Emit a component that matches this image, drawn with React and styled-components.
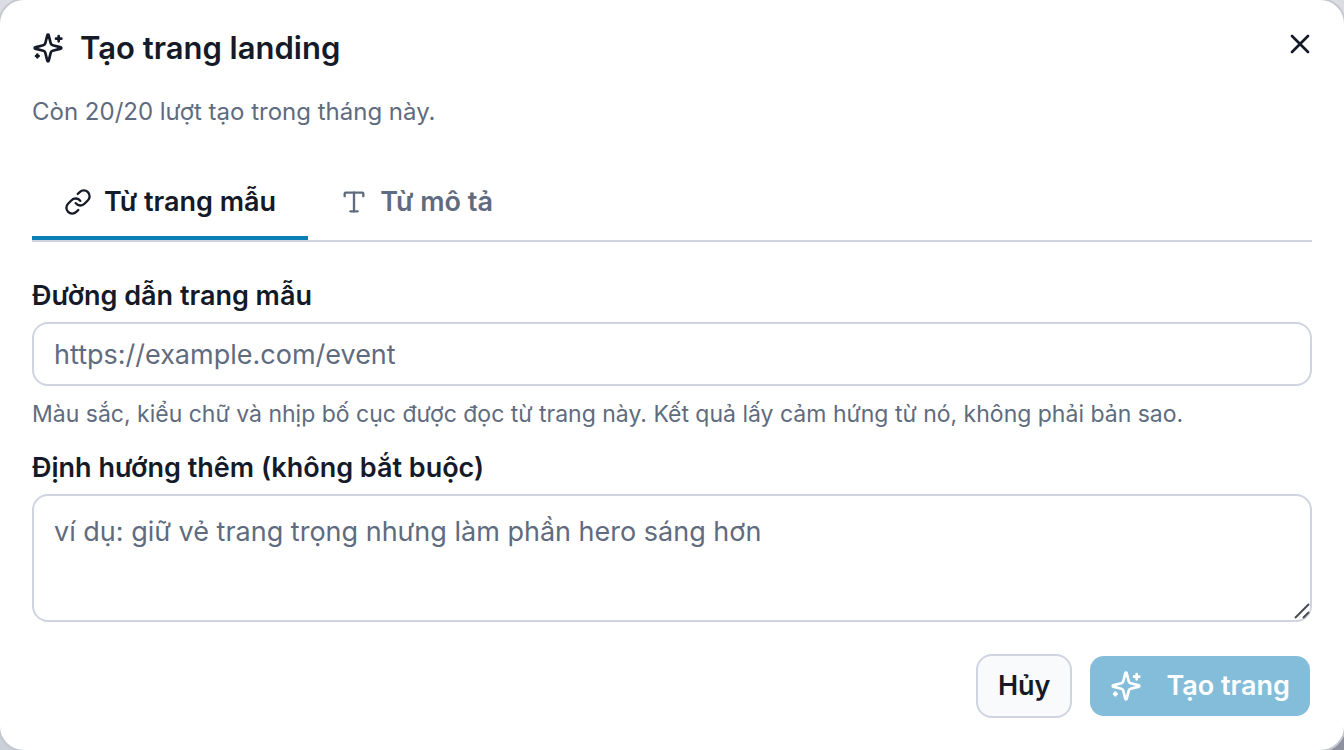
import React, { useState } from "react";
import styled, { createGlobalStyle } from "styled-components";
import { Link, Type, X } from "lucide-react";

const GlobalStyle = createGlobalStyle`
  *, *::before, *::after { box-sizing: border-box; }
  body {
    margin: 0;
    min-height: 100vh;
    background: linear-gradient(to bottom, #dcdde2 50%, transparent 50%),
      linear-gradient(to right, #c9d0d8 50%, #8d919e 50%);
    color: #151a28;
    font-family: Inter, "Liberation Sans", sans-serif;
    font-size: 27px;
    line-height: 40px;
  }
  button, input, textarea { font: inherit; color: inherit; }
`;

const Dialog = styled.section`
  padding: 28px 32px 32px;
  border-radius: 24px;
  background: #fff;
  box-shadow: 0 0 0 2px #c4c8cf;
`;

const Header = styled.header`
  display: flex;
  align-items: flex-start;
  justify-content: space-between;
`;

const Title = styled.h1`
  display: flex;
  align-items: center;
  gap: 16px;
  margin: 0;
  font-size: 31px;
  font-weight: 600;
  line-height: 40px;
`;

const CloseButton = styled.button`
  display: flex;
  margin-right: -4px;
  padding: 0;
  border: 0;
  background: none;
  cursor: pointer;
`;

const Description = styled.p`
  margin: 28px 0 0;
  color: #5f6b7e;
  font-size: 24px;
  line-height: 32px;
`;

const Hint = styled.p`
  margin: 12px 0 0;
  color: #5f6b7e;
  font-size: 23px;
  line-height: 32px;
`;

const TabList = styled.div`
  display: flex;
  margin-top: 40px;
  border-bottom: 2px solid #cfd4e0;
`;

const Tab = styled.button`
  display: flex;
  align-items: center;
  gap: 12px;
  padding: 14px 32px;
  border: 0;
  border-bottom: 4px solid ${({ $active }) => ($active ? "#0a80b6" : "transparent")};
  background: none;
  color: ${({ $active }) => ($active ? "#151a28" : "#5f6b7e")};
  font-weight: 600;
  cursor: pointer;
`;

const Field = styled.div`
  display: flex;
  flex-direction: column;
  margin-top: ${({ $top }) => $top}px;
`;

const Label = styled.label`
  margin-bottom: 6px;
  font-weight: 600;
`;

const controlStyles = `
  display: block;
  width: 100%;
  border: 2px solid #cfd4e0;
  border-radius: 16px;
  background: #fff;
  outline: none;
  &::placeholder { color: #5f6b7e; opacity: 1; }
`;

const TextInput = styled.input`
  ${controlStyles}
  height: 64px;
  padding: 0 20px;
`;

const AreaWrap = styled.div`
  position: relative;
`;

const TextArea = styled.textarea`
  ${controlStyles}
  height: 128px;
  padding: 16px 20px;
  resize: none;
`;

const Grip = styled.svg`
  position: absolute;
  right: 0;
  bottom: 2px;
  pointer-events: none;
`;

const Footer = styled.footer`
  display: flex;
  justify-content: flex-end;
  gap: 16px;
  margin-top: 32px;
`;

const Button = styled.button`
  display: flex;
  align-items: center;
  gap: 24px;
  height: 64px;
  padding: 0 20px;
  border: 2px solid ${({ $primary }) => ($primary ? "transparent" : "#cfd4e0")};
  border-radius: 16px;
  background: ${({ $primary }) => ($primary ? "#84bdd9" : "#f9fafc")};
  background-clip: padding-box;
  color: ${({ $primary }) => ($primary ? "#fff" : "#151a28")};
  font-weight: 600;
`;

function SparklesIcon() {
  return (
    <svg
      width="32"
      height="32"
      viewBox="0 0 24 24"
      fill="none"
      stroke="currentColor"
      strokeWidth="2"
      strokeLinecap="round"
      strokeLinejoin="round"
      aria-hidden="true"
    >
      <path d="M9.937 15.5A2 2 0 0 0 8.5 14.063l-6.135-1.582a.5.5 0 0 1 0-.962L8.5 9.936A2 2 0 0 0 9.937 8.5l1.582-6.135a.5.5 0 0 1 .963 0L14.063 8.5A2 2 0 0 0 15.5 9.937l6.135 1.581a.5.5 0 0 1 0 .964L15.5 14.063a2 2 0 0 0-1.437 1.437l-1.582 6.135a.5.5 0 0 1-.963 0z" />
      <path d="M20 3v4M22 5h-4M4 17v2M5 18H3" />
    </svg>
  );
}

export default function App() {
  const [tab, setTab] = useState("page");
  return (
    <>
      <GlobalStyle />
      <Dialog role="dialog" aria-labelledby="dialog-title">
        <Header>
          <Title id="dialog-title">
            <SparklesIcon />
            Tạo trang landing
          </Title>
          <CloseButton type="button">
            <X size={32} />
          </CloseButton>
        </Header>
        <Description>Còn 20/20 lượt tạo trong tháng này.</Description>
        <TabList role="tablist">
          <Tab type="button" role="tab" aria-selected={tab === "page"} $active={tab === "page"} onClick={() => setTab("page")}>
            <Link size={28} />
            Từ trang mẫu
          </Tab>
          <Tab type="button" role="tab" aria-selected={tab === "text"} $active={tab === "text"} onClick={() => setTab("text")}>
            <Type size={28} />
            Từ mô tả
          </Tab>
        </TabList>
        <Field $top={34}>
          <Label htmlFor="page-url">Đường dẫn trang mẫu</Label>
          <TextInput id="page-url" type="url" placeholder="https://example.com/event" />
          <Hint>
            Màu sắc, kiểu chữ và nhịp bố cục được đọc từ trang này. Kết quả lấy cảm hứng từ nó, không phải bản sao.
          </Hint>
        </Field>
        <Field $top={18}>
          <Label htmlFor="direction">Định hướng thêm (không bắt buộc)</Label>
          <AreaWrap>
            <TextArea id="direction" placeholder="ví dụ: giữ vẻ trang trọng nhưng làm phần hero sáng hơn" />
            <Grip width="18" height="18" viewBox="0 0 18 18" fill="none" stroke="#4a4d52" strokeWidth="2" aria-hidden="true">
              <path d="M1 16L15 2M9 16L15 10" />
            </Grip>
          </AreaWrap>
        </Field>
        <Footer>
          <Button type="button">Hủy</Button>
          <Button type="submit" $primary disabled>
            <SparklesIcon />
            Tạo trang
          </Button>
        </Footer>
      </Dialog>
    </>
  );
}
